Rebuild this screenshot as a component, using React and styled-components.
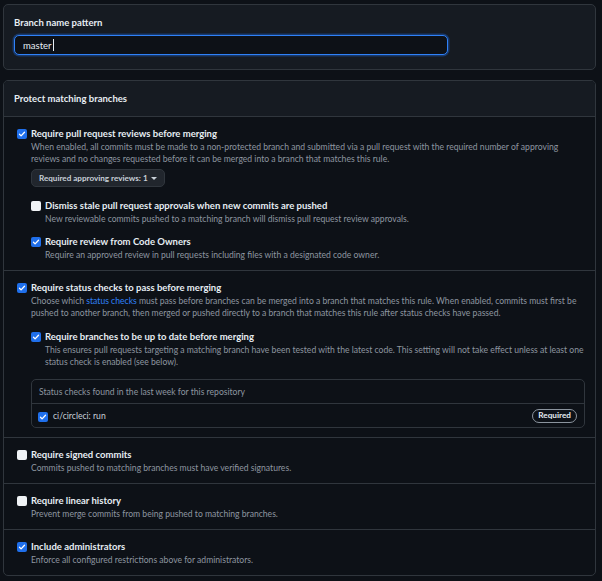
import React from 'react'
import styled, { createGlobalStyle } from 'styled-components'

const GlobalStyle = createGlobalStyle`
  html, body {
    margin: 0;
    padding: 0;
    background: #0d1117;
  }
  body {
    font-family: Lato, 'Noto Sans', 'Liberation Sans', sans-serif;
    color: #e6edf3;
    -webkit-font-smoothing: antialiased;
  }
`

const Page = styled.div`
  padding: 4px 6px 4px 3px;
  display: flex;
  flex-direction: column;
  gap: 10px;
`

const Panel = styled.div`
  border: 1px solid #30363d;
  border-radius: 5px;
  background: ${p => (p.$filled ? '#161b22' : '#0d1117')};
  overflow: hidden;
`

const PatternBody = styled.div`
  padding: 11px 10px 14px 10px;
  display: flex;
  flex-direction: column;
  gap: 5px;
`

const Label = styled.div`
  font-size: 9.5px;
  font-weight: 700;
  line-height: 14px;
`

const Input = styled.div`
  width: 434px;
  height: 20px;
  box-sizing: border-box;
  border: 1.5px solid #2f81f7;
  border-radius: 5px;
  background: #0d1117;
  box-shadow: 0 0 0 1.5px rgba(31, 111, 235, 0.35);
  display: flex;
  align-items: center;
  padding-left: 8px;
  font-size: 9.5px;
  color: #e6edf3;
`

const Caret = styled.span`
  display: inline-block;
  width: 1px;
  height: 12px;
  background: #e6edf3;
  margin-left: 1px;
`

const PanelHeader = styled.div`
  height: 35px;
  background: #161b22;
  border-bottom: 1px solid #30363d;
  display: flex;
  align-items: center;
  padding-left: 10px;
  font-size: 9.5px;
  font-weight: 700;
`

const Row = styled.div`
  padding: 10px 8px 9px 13px;
  border-top: ${p => (p.$first ? 'none' : '1px solid #30363d')};
`

const Option = styled.div`
  display: flex;
  gap: 4px;
  margin-top: ${p => p.$gap || 0}px;
`

const Box = styled.span`
  flex: none;
  width: 10px;
  height: 10px;
  box-sizing: border-box;
  border-radius: 2px;
  margin-top: 2px;
  background: ${p => (p.$checked ? '#1f6feb' : '#f0f3f6')};
  display: flex;
  align-items: center;
  justify-content: center;
`

const Content = styled.div`
  flex: 1;
  min-width: 0;
`

const Title = styled.div`
  font-size: 9.5px;
  font-weight: 700;
  line-height: 14px;
  color: #e6edf3;
`

const Desc = styled.div`
  font-size: 8.6px;
  line-height: 12px;
  color: #8d96a0;
`

const Link = styled.a`
  color: #2f81f7;
  text-decoration: none;
`

const SelectButton = styled.div`
  display: inline-flex;
  align-items: center;
  gap: 3px;
  height: 18px;
  margin-top: 3px;
  padding: 0 7px;
  border-radius: 5px;
  background: #21262d;
  border: 1px solid #30363d;
  box-sizing: border-box;
  font-size: 8.1px;
  font-weight: 700;
  color: #c9d1d9;
`

const Caretdown = styled.span`
  width: 0;
  height: 0;
  border-left: 3px solid transparent;
  border-right: 3px solid transparent;
  border-top: 3px solid #c9d1d9;
  margin-top: 1px;
`

const ChecksBox = styled.div`
  margin: 11px 2px 0 0;
  border: 1px solid #30363d;
  border-radius: 5px;
`

const ChecksHeader = styled.div`
  height: 23px;
  display: flex;
  align-items: center;
  padding-left: 7px;
  font-size: 8.6px;
  color: #8d96a0;
  border-bottom: 1px solid #30363d;
`

const CheckItem = styled.div`
  height: 23px;
  display: flex;
  align-items: center;
  padding: 0 7px 0 6px;
  gap: 5px;
  font-size: 8.6px;
  color: #c9d1d9;
`

const ItemName = styled.span`
  flex: 1;
`

const Badge = styled.span`
  border: 1px solid #8b949e;
  border-radius: 8px;
  padding: 0 5px;
  height: 12px;
  line-height: 11px;
  font-size: 8.2px;
  font-weight: 700;
  color: #e6edf3;
`

function Check({ checked }) {
  return (
    <Box $checked={checked}>
      {checked && (
        <svg width="8" height="8" viewBox="0 0 16 16">
          <path d="M3 8.5l3.2 3.2L13 4.5" fill="none" stroke="#fff" strokeWidth="2.6" strokeLinecap="round" strokeLinejoin="round" />
        </svg>
      )}
    </Box>
  )
}

export default function App() {
  return (
    <>
      <GlobalStyle />
      <Page>
        <Panel $filled>
          <PatternBody>
            <Label>Branch name pattern</Label>
            <Input>
              master<Caret />
            </Input>
          </PatternBody>
        </Panel>

        <Panel>
          <PanelHeader>Protect matching branches</PanelHeader>

          <Row $first>
            <Option>
              <Check checked />
              <Content>
                <Title>Require pull request reviews before merging</Title>
                <Desc>
                  When enabled, all commits must be made to a non-protected branch and submitted via a pull request with the required number of approving reviews and no changes requested before it can be merged into a branch that matches this rule.
                </Desc>
                <SelectButton>
                  Required approving reviews: 1 <Caretdown />
                </SelectButton>
                <Option $gap={12}>
                  <Check />
                  <Content>
                    <Title>Dismiss stale pull request approvals when new commits are pushed</Title>
                    <Desc>New reviewable commits pushed to a matching branch will dismiss pull request review approvals.</Desc>
                  </Content>
                </Option>
                <Option $gap={10}>
                  <Check checked />
                  <Content>
                    <Title>Require review from Code Owners</Title>
                    <Desc>Require an approved review in pull requests including files with a designated code owner.</Desc>
                  </Content>
                </Option>
              </Content>
            </Option>
          </Row>

          <Row>
            <Option>
              <Check checked />
              <Content>
                <Title>Require status checks to pass before merging</Title>
                <Desc>
                  Choose which <Link href="#">status checks</Link> must pass before branches can be merged into a branch that matches this rule. When enabled, commits must first be pushed to another branch, then merged or pushed directly to a branch that matches this rule after status checks have passed.
                </Desc>
                <Option $gap={11}>
                  <Check checked />
                  <Content>
                    <Title>Require branches to be up to date before merging</Title>
                    <Desc>
                      This ensures pull requests targeting a matching branch have been tested with the latest code. This setting will not take effect unless at least one status check is enabled (see below).
                    </Desc>
                  </Content>
                </Option>
                <ChecksBox>
                  <ChecksHeader>Status checks found in the last week for this repository</ChecksHeader>
                  <CheckItem>
                    <Check checked />
                    <ItemName>ci/circleci: run</ItemName>
                    <Badge>Required</Badge>
                  </CheckItem>
                </ChecksBox>
              </Content>
            </Option>
          </Row>

          <Row>
            <Option>
              <Check />
              <Content>
                <Title>Require signed commits</Title>
                <Desc>Commits pushed to matching branches must have verified signatures.</Desc>
              </Content>
            </Option>
          </Row>

          <Row>
            <Option>
              <Check />
              <Content>
                <Title>Require linear history</Title>
                <Desc>Prevent merge commits from being pushed to matching branches.</Desc>
              </Content>
            </Option>
          </Row>

          <Row>
            <Option>
              <Check checked />
              <Content>
                <Title>Include administrators</Title>
                <Desc>Enforce all configured restrictions above for administrators.</Desc>
              </Content>
            </Option>
          </Row>
        </Panel>
      </Page>
    </>
  )
}
